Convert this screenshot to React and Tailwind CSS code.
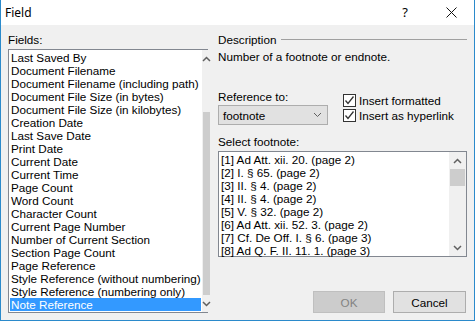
import React from 'react'

const fields = [
  'Last Saved By',
  'Document Filename',
  'Document Filename (including path)',
  'Document File Size (in bytes)',
  'Document File Size (in kilobytes)',
  'Creation Date',
  'Last Save Date',
  'Print Date',
  'Current Date',
  'Current Time',
  'Page Count',
  'Word Count',
  'Character Count',
  'Current Page Number',
  'Number of Current Section',
  'Section Page Count',
  'Page Reference',
  'Style Reference (without numbering)',
  'Style Reference (numbering only)',
  'Note Reference',
]

const notes = [
  '[1] Ad Att. xii. 20. (page 2)',
  '[2] I. § 65. (page 2)',
  '[3] II. § 4. (page 2)',
  '[4] II. § 4. (page 2)',
  '[5] V. § 32. (page 2)',
  '[6] Ad Att. xii. 52. 3. (page 2)',
  '[7] Cf. De Off. I. § 6. (page 3)',
  '[8] Ad Q. F. II. 11. 1. (page 3)',
]

function Chevron({ up }) {
  return (
    <svg width="9" height="6" viewBox="0 0 9 6">
      <path d={up ? 'M1 5L4.5 1.5L8 5' : 'M1 1L4.5 4.5L8 1'} fill="none" stroke="#606060" strokeWidth="1.5" />
    </svg>
  )
}

function ScrollBar({ thumbTop, thumbH }) {
  return (
    <div className="w-[17px] h-full bg-[#f0f0f0] flex flex-col">
      <div className="h-[17px] flex items-center justify-center"><Chevron up /></div>
      <div className="flex-1 flex flex-col">
        <div className={thumbTop} />
        <div className={`${thumbH} bg-[#cdcdcd] mx-[1px]`} />
      </div>
      <div className="h-[17px] flex items-center justify-center"><Chevron /></div>
    </div>
  )
}

function Check({ label }) {
  return (
    <div className="flex items-center h-[15px]">
      <div className="w-[13px] h-[13px] border border-[#333] bg-white flex items-center justify-center">
        <svg width="11" height="11" viewBox="0 0 11 11">
          <path d="M1.5 5.5L4 8.5L9.5 1.5" fill="none" stroke="#333" strokeWidth="1.3" />
        </svg>
      </div>
      <span className="ml-[3px]">{label}</span>
    </div>
  )
}

export default function App() {
  return (
    <div className="w-[475px] h-[321px] flex flex-col bg-[#f0f0f0] border-x border-b border-[#2b8acb] text-[11.7px] leading-[13px] text-black font-['Liberation_Sans',Arial,sans-serif] overflow-hidden">
      {/* title bar */}
      <div className="h-[26px] bg-white flex items-center">
        <span className="pl-[4px] text-[12px] font-['Noto_Sans',sans-serif] flex-1">Field</span>
        <span className="w-[46px] text-center text-[13px] font-['Noto_Sans',sans-serif]">?</span>
        <span className="w-[46px] flex justify-center">
          <svg width="11" height="11" viewBox="0 0 11 11">
            <path d="M0.5 0.5L10.5 10.5M10.5 0.5L0.5 10.5" stroke="#111" strokeWidth="1" />
          </svg>
        </span>
      </div>

      <div className="flex-1 flex pl-[7px] pr-[7px] pt-[8px] pb-[7px]">
        {/* left column */}
        <div className="w-[200px] flex flex-col">
          <div className="h-[13px] mb-[3px]">Fields:</div>
          <div className="flex-1 flex border border-[#828790] bg-white">
            <div className="flex-1 py-[1px] px-[1px]">
              {fields.map((f, i) => (
                <div key={i} className={`h-[13px] pl-[1px] whitespace-nowrap ${i === fields.length - 1 ? 'bg-[#3399ff] text-white' : ''}`}>{f}</div>
              ))}
            </div>
            <ScrollBar thumbTop="h-[45px]" thumbH="h-[183px]" />
          </div>
        </div>

        {/* right column */}
        <div className="ml-[10px] flex-1 flex flex-col">
          <div className="h-[13px] flex items-center">
            <span>Description</span>
            <div className="flex-1 h-px bg-[#a0a0a0] ml-[5px]" />
          </div>
          <div className="h-[13px] mt-[4px]">Number of a footnote or endnote.</div>

          <div className="flex mt-[30px]">
            <div className="flex flex-col">
              <div className="h-[13px] -mt-[3px]">Reference to:</div>
              <div className="w-[110px] h-[20px] mt-[2px] border border-[#adadad] bg-[#e1e1e1] flex items-center pl-[4px] pr-[5px]">
                <span className="flex-1">footnote</span>
                <svg width="9" height="6" viewBox="0 0 9 6">
                  <path d="M1 1L4.5 4.5L8 1" fill="none" stroke="#606060" strokeWidth="1" />
                </svg>
              </div>
            </div>
            <div className="ml-[15px] flex flex-col">
              <Check label="Insert formatted" />
              <Check label="Insert as hyperlink" />
            </div>
          </div>

          <div className="h-[13px] mt-[10px]">Select footnote:</div>
          <div className="h-[106px] mt-[3px] flex border border-[#828790] bg-white">
            <div className="flex-1 py-[1px] px-[2px]">
              {notes.map((n, i) => (
                <div key={i} className="h-[13px] whitespace-nowrap">{n}</div>
              ))}
            </div>
            <ScrollBar thumbTop="h-0" thumbH="h-[17px]" />
          </div>

          <div className="flex-1" />
          <div className="flex justify-end gap-[8px] pr-[1px]">
            <div className="w-[72px] h-[22px] border border-[#bfbfbf] bg-[#cccccc] text-[#838383] flex items-center justify-center">OK</div>
            <div className="w-[73px] h-[22px] border border-[#adadad] bg-[#e1e1e1] flex items-center justify-center">Cancel</div>
          </div>
        </div>
      </div>
    </div>
  )
}
